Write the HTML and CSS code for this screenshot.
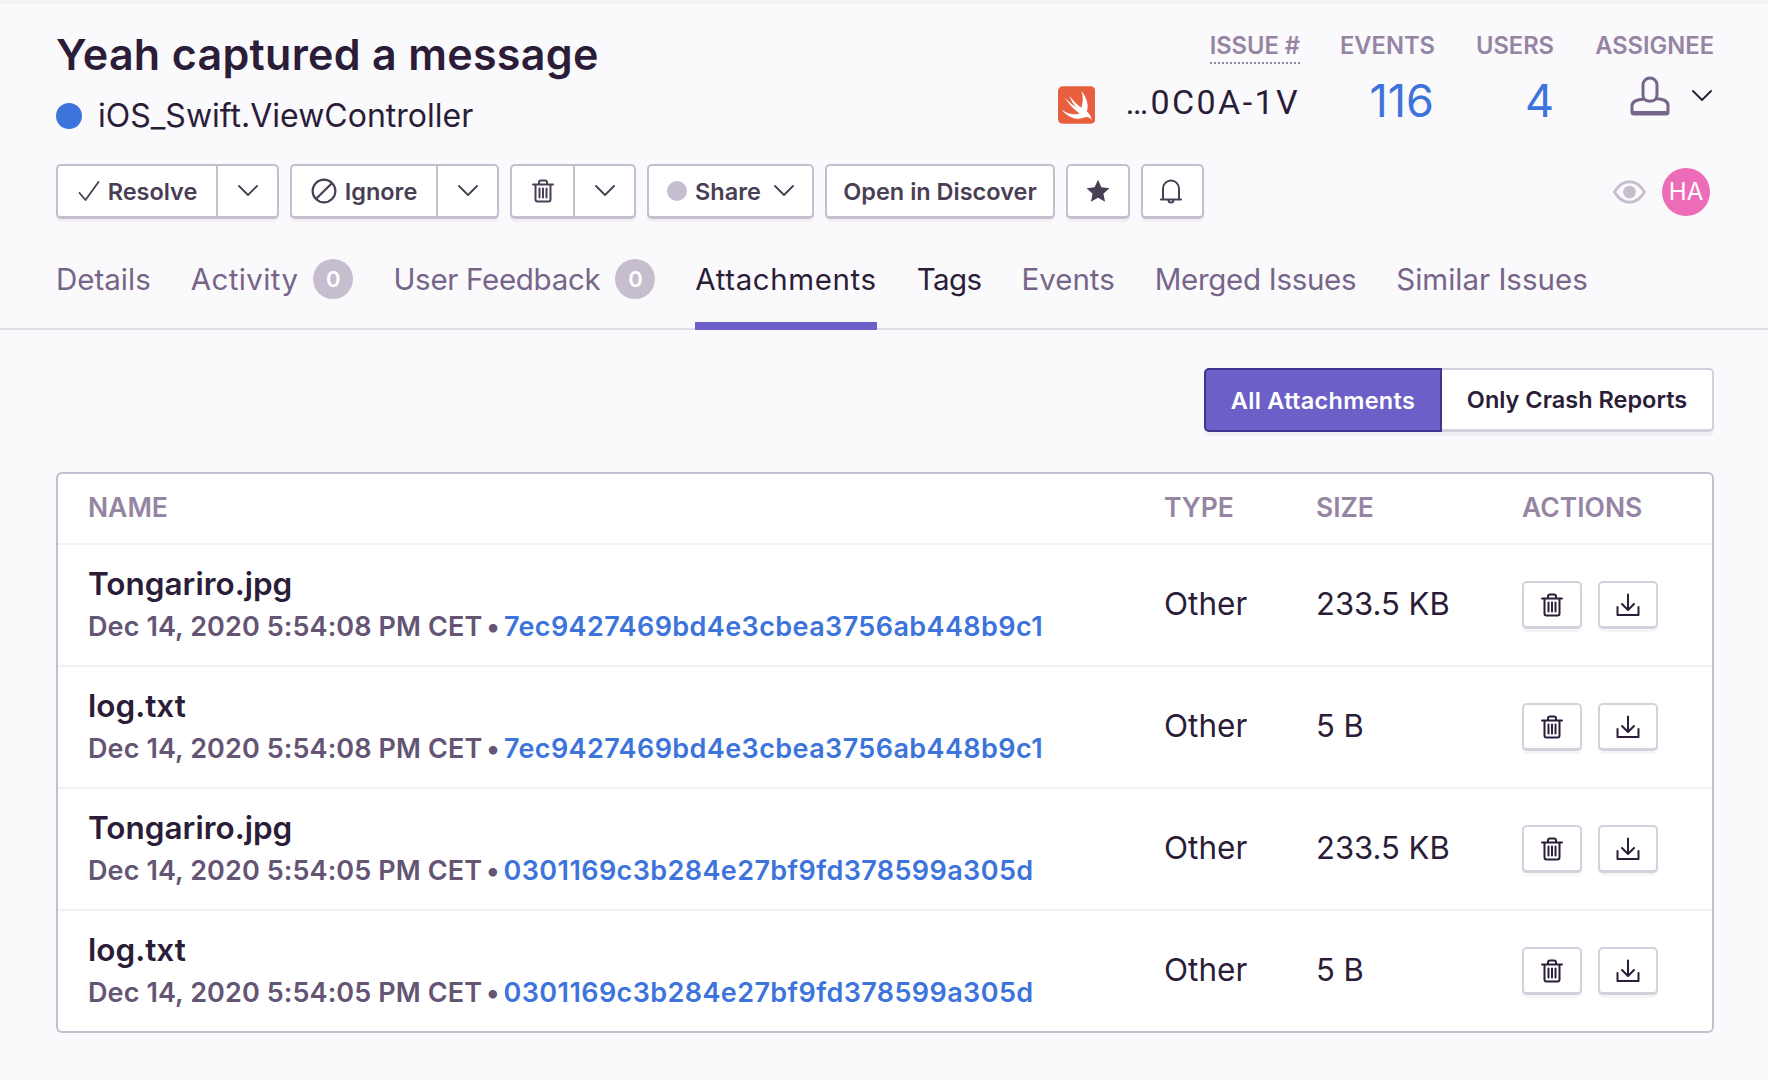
FILE: index.html
```html
<!DOCTYPE html>
<html lang="en">
<head>
  <meta charset="UTF-8">
  <title>Yeah captured a message - Attachments</title>
  <link rel="stylesheet" href="styles.css">
</head>
<body>
  <svg class="defs" width="0" height="0">
    <symbol id="trash" viewBox="0 0 24 24">
      <path d="M2 5.500h20M4.500 5.500v15a2 2 0 0 0 2 2h11a2 2 0 0 0 2-2v-15M8 5.500V3.500a2 2 0 0 1 2-2h4a2 2 0 0 1 2 2v2M8.500 9.500v9M12 9.500v9M15.500 9.500v9" fill="none" stroke="currentColor" stroke-width="2" stroke-linecap="round"/>
    </symbol>
    <symbol id="download" viewBox="0 0 24 24">
      <path d="M12 1.500v15M6 11l6 6 6-6M1.500 14v8h21v-8" fill="none" stroke="currentColor" stroke-width="2" stroke-linecap="round" stroke-linejoin="round"/>
    </symbol>
    <symbol id="chevron" viewBox="0 0 20 12">
      <path d="M1 1l9 9 9-9" fill="none" stroke="currentColor" stroke-width="1.800" stroke-linecap="round" stroke-linejoin="round"/>
    </symbol>
  </svg>

  <header class="issue-header">
    <div class="issue-top">
      <div class="issue-heading">
        <h1>Yeah captured a message</h1>
        <div class="culprit"><span class="level-dot"></span>iOS_Swift.ViewController</div>
      </div>
      <div class="stats">
        <div class="stat stat-id">
          <div class="stat-label"><span class="dotted">ISSUE #</span></div>
          <div class="short-id">
            <svg class="swift-logo" viewBox="0 0 40 40">
              <rect width="40" height="40" rx="5" fill="#e85f40"/>
              <path d="M25 5C31 12 33 20 31 27C34 30 36 33 36 36C34 33 31 32 28 33.500C21 36.500 11 34 4 25C11 30 18 31 23 29C17 25 11 18 7 12C12 17 17 21 20 23C17 20 14 15 12 10C16 15 21 20 25 23C27 17 27 11 25 5Z" fill="#fff"/>
            </svg>
            <span class="mono">…0C0A-1V</span>
          </div>
        </div>
        <div class="stat stat-events">
          <div class="stat-label">EVENTS</div>
          <div class="stat-count">116</div>
        </div>
        <div class="stat stat-users">
          <div class="stat-label">USERS</div>
          <div class="stat-count">4</div>
        </div>
        <div class="stat stat-assignee">
          <div class="stat-label">ASSIGNEE</div>
          <div class="assignee">
            <svg class="user-icon" viewBox="0 0 40 40">
              <path d="M13 9a7 7 0 0 1 14 0v7c0 3 0 5.500-1 6.500 6 .5 12 1.500 12 7v6.500a2 2 0 0 1-2 2H4a2 2 0 0 1-2-2V30c0-5.500 6-6.500 12-7-1-1-1-3.500-1-6.500zM14 23c3 3 9 3 12 0" fill="none" stroke="#776589" stroke-width="3" stroke-linejoin="round"/>
              <path d="M3 36.500h34" stroke="#776589" stroke-width="3"/>
            </svg>
            <svg class="chev-assignee"><use href="#chevron"/></svg>
          </div>
        </div>
      </div>
    </div>

    <div class="toolbar">
      <div class="btn-group">
        <button class="btn btn-wide">
          <svg class="ico-check" viewBox="0 0 22 22"><path d="M1.500 13l6 7L20.500 2" fill="none" stroke="currentColor" stroke-width="1.800" stroke-linecap="round" stroke-linejoin="round"/></svg>
          Resolve
        </button>
        <button class="btn btn-caret"><svg class="chev"><use href="#chevron"/></svg></button>
      </div>
      <div class="btn-group">
        <button class="btn btn-wide">
          <svg class="ico-ignore" viewBox="0 0 24 24"><circle cx="12" cy="12" r="10.500" fill="none" stroke="currentColor" stroke-width="2"/><path d="M5 19L19 5" stroke="currentColor" stroke-width="2"/></svg>
          Ignore
        </button>
        <button class="btn btn-caret"><svg class="chev"><use href="#chevron"/></svg></button>
      </div>
      <div class="btn-group">
        <button class="btn btn-trash"><svg class="ico-trash"><use href="#trash"/></svg></button>
        <button class="btn btn-caret"><svg class="chev"><use href="#chevron"/></svg></button>
      </div>
      <button class="btn btn-share"><span class="share-dot"></span>Share<svg class="chev"><use href="#chevron"/></svg></button>
      <button class="btn btn-discover">Open in Discover</button>
      <button class="btn btn-square">
        <svg class="ico-star" viewBox="0 0 24 24"><path d="M12 .8l3.400 7.500 8 .9-6 5.500 1.700 8.100L12 18.700l-7.100 4.100 1.700-8.100-6-5.500 8-.9z" fill="currentColor"/></svg>
      </button>
      <button class="btn btn-square">
        <svg class="ico-bell" viewBox="0 0 22 25"><path d="M3 20.500V9.500a8 8 0 0 1 16 0v11M1 20.500h20M8.500 21a2.500 2.500 0 0 0 5 0" fill="none" stroke="currentColor" stroke-width="2" stroke-linecap="round" stroke-linejoin="round"/></svg>
      </button>
      <div class="seen-by">
        <svg class="ico-eye" viewBox="0 0 34 24"><path d="M1.500 12C6 4.500 11 1.500 17 1.500S28 4.500 32.500 12C28 19.500 23 22.500 17 22.500S6 19.500 1.500 12z" fill="none" stroke="#c6becf" stroke-width="3"/><circle cx="17" cy="12" r="6.500" fill="#c6becf"/></svg>
        <span class="avatar">HA</span>
      </div>
    </div>

    <nav class="tabs">
      <a class="tab">Details</a>
      <a class="tab tab-activity">Activity<span class="tab-badge">0</span></a>
      <a class="tab tab-tight">User Feedback<span class="tab-badge">0</span></a>
      <a class="tab tab-active">Attachments</a>
      <a class="tab tab-dark">Tags</a>
      <a class="tab">Events</a>
      <a class="tab tab-tight">Merged Issues</a>
      <a class="tab">Similar Issues</a>
    </nav>
  </header>

  <main class="content">
    <div class="filter-row">
      <div class="segmented">
        <button class="seg seg-on">All Attachments</button>
        <button class="seg">Only Crash Reports</button>
      </div>
    </div>

    <section class="panel">
      <div class="row row-head">
        <div>NAME</div>
        <div>TYPE</div>
        <div>SIZE</div>
        <div>ACTIONS</div>
      </div>

      <div class="row">
        <div>
          <div class="file-name">Tongariro.jpg</div>
          <div class="file-meta">Dec 14, 2020 5:54:08 PM CET <span class="sep">•</span> <a class="event-link">7ec9427469bd4e3cbea3756ab448b9c1</a></div>
        </div>
        <div class="cell">Other</div>
        <div class="cell cell-size">233.5 KB</div>
        <div class="actions">
          <button class="btn btn-action"><svg class="ico-act"><use href="#trash"/></svg></button>
          <button class="btn btn-action"><svg class="ico-act"><use href="#download"/></svg></button>
        </div>
      </div>

      <div class="row">
        <div>
          <div class="file-name">log.txt</div>
          <div class="file-meta">Dec 14, 2020 5:54:08 PM CET <span class="sep">•</span> <a class="event-link">7ec9427469bd4e3cbea3756ab448b9c1</a></div>
        </div>
        <div class="cell">Other</div>
        <div class="cell cell-size">5 B</div>
        <div class="actions">
          <button class="btn btn-action"><svg class="ico-act"><use href="#trash"/></svg></button>
          <button class="btn btn-action"><svg class="ico-act"><use href="#download"/></svg></button>
        </div>
      </div>

      <div class="row">
        <div>
          <div class="file-name">Tongariro.jpg</div>
          <div class="file-meta">Dec 14, 2020 5:54:05 PM CET <span class="sep">•</span> <a class="event-link">0301169c3b284e27bf9fd378599a305d</a></div>
        </div>
        <div class="cell">Other</div>
        <div class="cell cell-size">233.5 KB</div>
        <div class="actions">
          <button class="btn btn-action"><svg class="ico-act"><use href="#trash"/></svg></button>
          <button class="btn btn-action"><svg class="ico-act"><use href="#download"/></svg></button>
        </div>
      </div>

      <div class="row">
        <div>
          <div class="file-name">log.txt</div>
          <div class="file-meta">Dec 14, 2020 5:54:05 PM CET <span class="sep">•</span> <a class="event-link">0301169c3b284e27bf9fd378599a305d</a></div>
        </div>
        <div class="cell">Other</div>
        <div class="cell cell-size">5 B</div>
        <div class="actions">
          <button class="btn btn-action"><svg class="ico-act"><use href="#trash"/></svg></button>
          <button class="btn btn-action"><svg class="ico-act"><use href="#download"/></svg></button>
        </div>
      </div>
    </section>
  </main>
</body>
</html>
```

FILE: styles.css
```css
* {
  box-sizing: border-box;
}

html, body {
  height: 100%;
}

body {
  margin: 0;
  background-color: #faf9fb;
  border-top: 4px solid #f2f1f4;
  font-family: 'Inter', 'Liberation Sans', sans-serif;
  color: #2b1d38;
  overflow: hidden;
}

.defs {
  position: absolute;
}

.issue-header {
  border-bottom: 2px solid #e2dee6;
  padding: 0 54px 0 56px;
  height: 326px;
}

.issue-top {
  display: flex;
  justify-content: space-between;
  height: 160px;
}

h1 {
  margin: 25px 0 0;
  font-size: 43px;
  line-height: 50px;
  font-weight: 600;
  letter-spacing: 0.300px;
  color: #2b1d38;
}

.culprit {
  display: flex;
  align-items: center;
  margin-top: 17px;
  font-size: 32px;
  line-height: 40px;
  color: #2b1d38;
}

.level-dot {
  width: 26px;
  height: 26px;
  border-radius: 50%;
  background-color: #3d74db;
  margin-right: 16px;
}

.stats {
  display: flex;
  gap: 40px;
  padding-top: 27px;
}

.stat {
  text-align: right;
}

.stat-label {
  font-size: 23.700px;
  line-height: 30px;
  font-weight: 600;
  color: #9585a3;
  white-space: nowrap;
}

.dotted {
  display: inline-block;
  line-height: 30px;
  border-bottom: 2px dotted #9585a3;
  padding-bottom: 1px;
}

.short-id {
  display: flex;
  align-items: center;
  justify-content: flex-end;
  gap: 30px;
  margin-top: 21px;
  height: 40px;
}

.swift-logo {
  width: 40px;
  height: 40px;
}

.mono {
  margin-top: -6px;
  font-family: 'Roboto', 'Liberation Mono', monospace;
  font-size: 34px;
  letter-spacing: 2.400px;
  color: #2b1d38;
  white-space: nowrap;
}

.stat-count {
  margin-top: 15px;
  font-size: 45px;
  line-height: 50px;
  color: #3d74db;
}

.stat-id {
  width: 242px;
}

.stat-events {
  width: 94px;
}

.stat-users {
  width: 80px;
}

.stat-assignee {
  width: 120px;
}

.assignee {
  display: flex;
  justify-content: flex-end;
  align-items: flex-start;
  margin-top: 15px;
}

.user-icon {
  width: 40px;
  height: 40px;
}

.chev-assignee {
  width: 20px;
  height: 12px;
  margin: 14px 2px 0 22px;
  color: #2b1d38;
}

.toolbar {
  display: flex;
  align-items: center;
  gap: 11px;
  height: 55px;
}

.btn {
  display: inline-flex;
  align-items: center;
  justify-content: center;
  height: 55px;
  background-color: #fff;
  border: 2px solid #c6becf;
  border-bottom-width: 3px;
  border-radius: 5px;
  box-shadow: 0 3px 0 rgba(37, 11, 54, 0.04);
  font-family: inherit;
  font-size: 23.500px;
  font-weight: 600;
  color: #493e54;
  padding: 0;
}

.btn-group {
  display: flex;
}

.btn-group .btn:first-child {
  border-radius: 5px 0 0 5px;
  border-right-width: 0;
}

.btn-group .btn:last-child {
  border-radius: 0 5px 5px 0;
}

.btn-group:nth-child(1) .btn-wide {
  width: 160px;
  padding-left: 1px;
}

.btn-group:nth-child(2) .btn-wide {
  width: 146px;
}

.btn-trash {
  width: 63px;
}

.btn-caret {
  width: 63px;
}

.chev {
  width: 20px;
  height: 12px;
  color: #493e54;
}

.ico-check {
  width: 22px;
  height: 22px;
  margin-right: 8px;
}

.ico-ignore {
  width: 26px;
  height: 26px;
  margin-right: 8px;
}

.ico-trash {
  width: 24px;
  height: 24px;
}

.btn-share {
  width: 167px;
}

.share-dot {
  width: 20px;
  height: 20px;
  border-radius: 50%;
  background-color: #c6becf;
  margin-right: 8px;
}

.btn-share .chev {
  margin-left: 13px;
}

.btn-discover {
  width: 230px;
}

.btn-square {
  width: 63.500px;
}

.ico-star {
  width: 24px;
  height: 24px;
}

.ico-bell {
  width: 22px;
  height: 25px;
  margin-right: 3px;
}

.seen-by {
  display: flex;
  align-items: center;
  gap: 16px;
  margin-left: auto;
  padding-right: 4px;
}

.ico-eye {
  width: 33px;
  height: 24px;
}

.avatar {
  display: flex;
  align-items: center;
  justify-content: center;
  width: 48px;
  height: 48px;
  border-radius: 50%;
  background-color: #ed6cb8;
  color: #fff;
  font-size: 24px;
}

.tabs {
  display: flex;
  gap: 40px;
  margin-top: 21px;
  height: 90px;
}

.tab {
  display: flex;
  align-items: flex-start;
  padding-top: 19px;
  font-size: 29.500px;
  line-height: 40px;
  color: #776589;
  white-space: nowrap;
}

.tab-activity {
  letter-spacing: 0.400px;
}

.tab-tight {
  letter-spacing: -0.300px;
}

.tab-dark {
  color: #2b1d38;
  letter-spacing: -0.600px;
}

.tab-active {
  color: #2b1d38;
  border-bottom: 8px solid #6c5fc7;
  letter-spacing: 0.600px;
}

.tab-badge {
  display: flex;
  align-items: center;
  justify-content: center;
  width: 40px;
  height: 40px;
  margin-left: 15px;
  border-radius: 50%;
  background-color: #c6becf;
  color: #fff;
  font-size: 22px;
  font-weight: 600;
}

.content {
  padding: 38px 54px 0 56px;
}

.filter-row {
  display: flex;
  justify-content: flex-end;
}

.segmented {
  display: flex;
  height: 64px;
  box-shadow: 0 4px 0 rgba(37, 11, 54, 0.04);
  border-radius: 5px;
}

.seg {
  height: 64px;
  width: 272px;
  border: 2px solid #d5d0dc;
  border-left-width: 0;
  border-bottom-width: 3px;
  border-radius: 0 5px 5px 0;
  background-color: #fff;
  font-family: inherit;
  font-size: 23.500px;
  font-weight: 600;
  color: #2b1d38;
  padding: 0;
}

.seg-on {
  width: 238px;
  background-color: #6c5fc7;
  border: 2px solid #3e3490;
  border-radius: 5px 0 0 5px;
  letter-spacing: 0.300px;
  color: #fff;
}

.panel {
  margin-top: 40px;
  background-color: #fff;
  border: 2px solid #c6becf;
  border-radius: 6px;
}

.row {
  display: grid;
  grid-template-columns: 1076px 152px 206px 1fr;
  align-items: center;
  height: 122px;
  padding-left: 30px;
  border-top: 2px solid #f2f0f5;
}

.row-head {
  height: 69px;
  padding-bottom: 3px;
  border-top: none;
  font-size: 26.500px;
  font-weight: 600;
  color: #9585a3;
}

.file-name {
  margin-top: 0;
  font-size: 31.500px;
  line-height: 38px;
  font-weight: 600;
  color: #2b1d38;
}

.file-meta {
  margin-top: 6px;
  font-size: 27px;
  line-height: 36px;
  font-weight: 600;
  letter-spacing: 0.100px;
  color: #645574;
  white-space: nowrap;
}

.sep {
  margin: 0 -3px;
}

.event-link {
  letter-spacing: 0.400px;
  color: #3d74db;
}

.cell {
  margin-top: -3px;
  font-size: 31.500px;
  color: #2b1d38;
}

.cell-size {
  font-size: 31px;
}

.actions {
  display: flex;
  gap: 16px;
}

.btn-action {
  width: 60px;
  height: 48px;
  border-color: #d5d0dc;
}

.ico-act {
  width: 24px;
  height: 24px;
  color: #2b1d38;
}
```
